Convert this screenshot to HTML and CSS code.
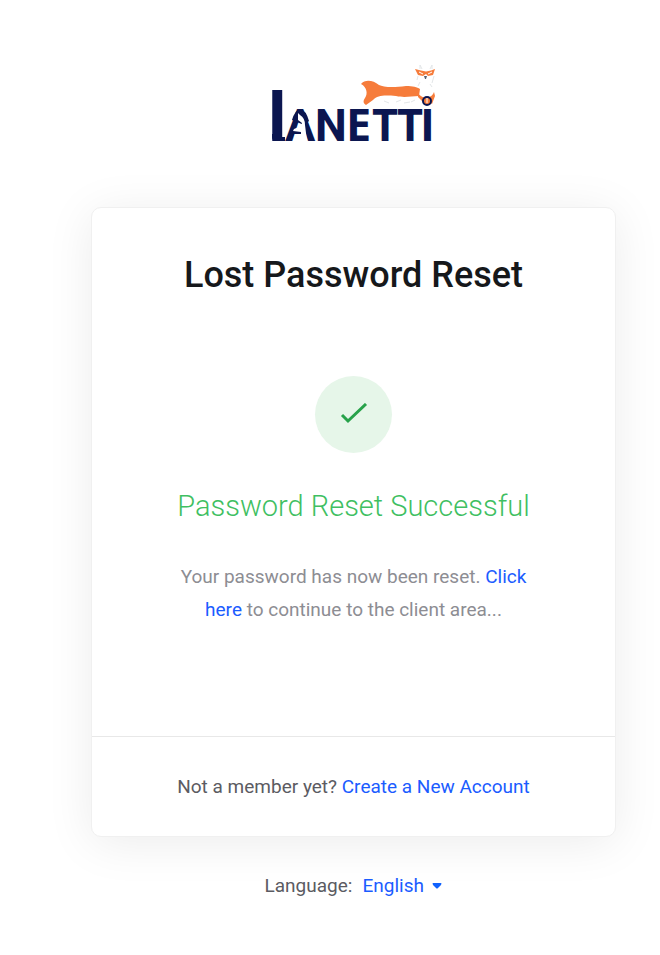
FILE: index.html
```html
<!DOCTYPE html>
<html lang="en">
<head>
    <meta charset="UTF-8">
    <meta name="viewport" content="width=device-width, initial-scale=1.0">
    <title>Lost Password Reset</title>
    <link rel="stylesheet" href="styles.css">
</head>
<body>
    <main class="login">
        <a class="logo" href="#" aria-label="Lanetti">
            <svg width="180" height="100" viewBox="-8 0 180 100">
                <!-- wordmark -->
                <g class="logo-text">
                    <text class="logo-tall" x="-5" y="77">l</text>
                    <text class="logo-narrow" x="13" y="77">A</text>
                    <text class="logo-narrow" x="43" y="77">N</text>
                    <text x="74" y="77">E</text>
                    <text x="100" y="77">T</text>
                    <text x="125" y="77">T</text>
                    <text x="148" y="77">I</text>
                </g>
                <path fill="#0b1650" d="M0 70h8v3h5v4H4q-4 0-4-4z"/>
                <!-- fox profile inside the A -->
                <path fill="#0b1650" d="M20 56q3-10 8-11 6 1 9 12l-5 4z"/>
                <path fill="#fff" d="M26 49l2 2q5 3 5 10 1 8 2 16h-12l1-4 5-2v-3l-8-1 1-2 7-3 1-3-4-3z"/>
                <!-- fox -->
                <path fill="#f67c3b" d="M89 20C93 15 101 16 107 21C111 23 120 24 134 22C141 22 145 23 148 25L147 32C139 32 133 34 124 32C112 31 106 31 101 36L94 41C91 39 91 37 93 34C96 30 95 23 89 20z"/>
                <path fill="#f67c3b" d="M146 29q3 5 8 4 6 1 8-5l1 4-3 8-5-4-5 1-4-4z"/>
                <path fill="#f67c3b" d="M143 5l6 1.500 5 1 5-1L163 5l-2 6-5 1-2-2-3 2-5-1z"/>
                <path fill="none" stroke="#fff" d="M147 8l4 2M156 10l4-2"/>
                <path fill="#596171" d="M152 12h3l-1 3h-1z"/>
                <path fill="none" stroke="#e3e6e8" d="M148 5V1l2 4M160 5V1l-2 4M146 12l-1 4M162 12l-2 7M148 18l-2 4M158 20l2 3M112 37l5 2M124 38l5-2M132 39l6-1M139 38l4-2"/>
                <circle cx="155" cy="37" r="4" fill="#f67c3b" stroke="#0b1650" stroke-width="2"/>
                <path stroke="#fff" d="M155 34v5"/>
            </svg>
        </a>

        <section class="card">
            <div class="card-body">
                <h1>Lost Password Reset</h1>
                <div class="message">
                    <div class="message-icon">
                        <svg width="28" height="24" viewBox="0 0 28 24">
                            <path d="M2 12l6 6L26 1" fill="none" stroke="#27a24a" stroke-width="3"/>
                        </svg>
                    </div>
                    <h2>Password Reset Successful</h2>
                    <p>Your password has now been reset. <a href="#">Click here</a> to continue to the client area...</p>
                </div>
            </div>
            <div class="card-footer">
                Not a member yet? <a href="#">Create a New Account</a>
            </div>
        </section>

        <div class="language">
            <label for="language">Language:</label>
            <div class="language-select">
                <select id="language">
                    <option selected>English</option>
                </select>
                <svg width="10" height="6" viewBox="0 0 10 6">
                    <path d="M1 0h8q1 0 0 2L6 5Q5 6 4 5L1 2Q0 0 1 0z" fill="#1062fe"/>
                </svg>
            </div>
        </div>
    </main>
</body>
</html>
```
FILE: styles.css
```css
* {
    box-sizing: border-box;
}

body {
    margin: 0;
    font-family: Roboto, sans-serif;
    font-size: 19px;
    line-height: 33px;
    color: #5b5b62;
    background-color: #fff;
}

a {
    color: #1b5cff;
    text-decoration: none;
}

.login {
    display: flex;
    flex-direction: column;
    align-items: center;
    padding: 64px 44px 56px 91px;
}

.logo {
    display: flex;
    margin-bottom: 43px;
}

.logo-text {
    font-family: "Open Sans", sans-serif;
    font-size: 45px;
    font-weight: 700;
    fill: #0b1650;
}

.logo-tall {
    font-size: 67px;
}

.logo-narrow {
    font-family: Roboto, sans-serif;
}

.card {
    width: 100%;
    border: 1px solid #f0f0f0;
    border-radius: 10px;
    background-color: #fff;
    text-align: center;
    box-shadow: 0 6px 48px rgba(0, 0, 0, 0.08);
}

.card-body {
    padding: 44px 72px 110px;
}

h1 {
    margin: 0 0 78px;
    font-size: 36px;
    font-weight: 500;
    line-height: 46px;
    color: #16181b;
}

.message-icon {
    display: flex;
    align-items: center;
    justify-content: center;
    width: 77px;
    height: 77px;
    margin: 0 auto 34px;
    border-radius: 50%;
    background-color: #e6f6e9;
}

h2 {
    margin: 0 0 35px;
    font-size: 29px;
    font-weight: 300;
    line-height: 38px;
    color: #3fbf62;
}

p {
    margin: 0;
    color: #8d8d93;
}

.card-footer {
    padding: 33px 40px;
    border-top: 1px solid #e8e8e8;
}

.language {
    display: flex;
    gap: 10px;
    margin-top: 32px;
}

.language-select {
    display: flex;
    align-items: center;
    gap: 8px;
}

select {
    appearance: none;
    padding: 0;
    border: 0;
    background: none;
    font: inherit;
    color: #1b5cff;
    cursor: pointer;
}
```
